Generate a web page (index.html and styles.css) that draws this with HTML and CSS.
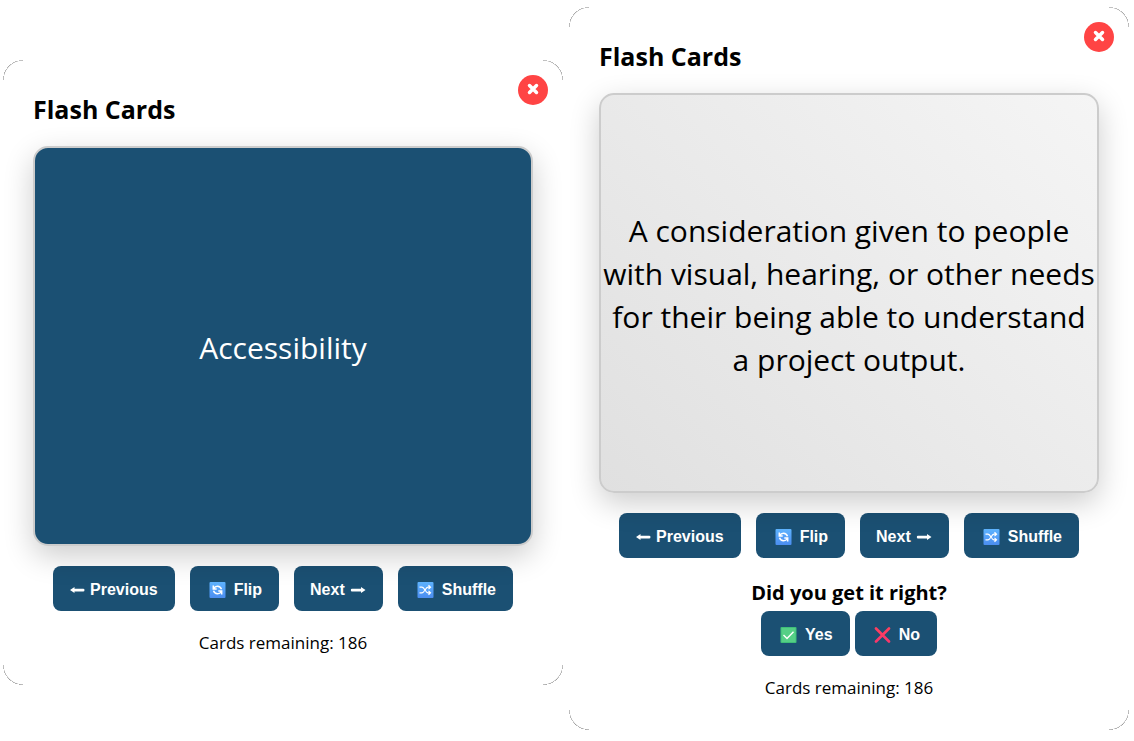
FILE: index.html
```
<!DOCTYPE html>
<html lang="en">
<head>
    <meta charset="UTF-8">
    <meta name="viewport" content="width=device-width, initial-scale=1.0">
    <title>Flash Cards</title>
    <link rel="stylesheet" href="styles.css">
</head>
<body>
    <!-- Shared icons -->
    <svg class="icon-defs" aria-hidden="true">
        <defs>
            <linearGradient id="blueTile" x1="0" y1="0" x2="0" y2="1">
                <stop offset="0" stop-color="#5fb4ff"/>
                <stop offset="1" stop-color="#4b8df0"/>
            </linearGradient>
            <linearGradient id="pinkCross" x1="0" y1="0" x2="0" y2="1">
                <stop offset="0" stop-color="#ff3f5f"/>
                <stop offset="1" stop-color="#f8376b"/>
            </linearGradient>
        </defs>
        <symbol id="icon-left" viewBox="0 0 16 16">
            <path d="M1 8 L5.500 5 V6.700 H14.200 Q15.500 6.700 15.500 8 Q15.500 9.500 14.200 9.500 H5.500 V11 Z" fill="#fff"/>
        </symbol>
        <symbol id="icon-right" viewBox="0 0 16 16">
            <path d="M15.500 8 L11 5 V6.700 H2 Q0.800 6.700 0.800 8 Q0.800 9.500 2 9.500 H11 V11 Z" fill="#fff"/>
        </symbol>
        <symbol id="icon-flip" viewBox="0 0 16 16">
            <rect width="16" height="16" rx="1" fill="url(#blueTile)"/>
            <path d="M3.800 3.500 V7 H7.200 M4.200 6.500 C5.800 3.500 10.500 3.300 12 7.200 M12.200 12.500 V9 H8.800 M11.800 9.500 C10.200 12.500 5.500 12.700 4 8.800" fill="none" stroke="#fff" stroke-width="1.500"/>
        </symbol>
        <symbol id="icon-shuffle" viewBox="0 0 16 16">
            <rect width="16" height="16" rx="1" fill="url(#blueTile)"/>
            <path d="M2 5.200 H4.500 C7 5.200 8 10.800 10.500 10.800 H12.500 M2 10.800 H4.500 C7 10.800 8 5.200 10.500 5.200 H12.500 M11 3.300 L13 5.200 L11 7.100 M11 8.900 L13 10.800 L11 12.700" fill="none" stroke="#fff" stroke-width="1.200"/>
        </symbol>
        <symbol id="icon-yes" viewBox="0 0 16 16">
            <rect width="16" height="16" rx="1" fill="#3fbf78"/>
            <rect x="1" y="1" width="14" height="14" fill="#55cf86"/>
            <path d="M3 8 L6.500 11.500 L13 4.700" fill="none" stroke="#fff" stroke-width="1.400"/>
        </symbol>
        <symbol id="icon-no" viewBox="0 0 16 16">
            <path d="M1.500 1.500 L14.500 14.500 M14.500 1.500 L1.500 14.500" fill="none" stroke="url(#pinkCross)" stroke-width="2.600" stroke-linecap="round"/>
        </symbol>
        <symbol id="icon-close" viewBox="0 0 12 12">
            <path d="M2.500 2.500 L9.500 9.500 M9.500 2.500 L2.500 9.500" fill="none" stroke="#fff" stroke-width="3.500" stroke-linecap="round"/>
        </symbol>
    </svg>

    <main class="container">
        <section class="modal modal-front">
            <button class="close-btn" aria-label="Close"><svg><use href="#icon-close"/></svg></button>
            <h2>Flash Cards</h2>
            <div class="flashcard front">Accessibility</div>
            <div class="controls">
                <button class="btn"><svg class="arrow"><use href="#icon-left"/></svg>Previous</button>
                <button class="btn"><svg class="emoji"><use href="#icon-flip"/></svg>Flip</button>
                <button class="btn">Next<svg class="arrow"><use href="#icon-right"/></svg></button>
                <button class="btn"><svg class="emoji"><use href="#icon-shuffle"/></svg>Shuffle</button>
            </div>
            <p class="remaining">Cards remaining: 186</p>
        </section>

        <section class="modal">
            <button class="close-btn" aria-label="Close"><svg><use href="#icon-close"/></svg></button>
            <h2>Flash Cards</h2>
            <div class="flashcard back">A consideration given to people with visual, hearing, or other needs for their being able to understand a project output.</div>
            <div class="controls">
                <button class="btn"><svg class="arrow"><use href="#icon-left"/></svg>Previous</button>
                <button class="btn"><svg class="emoji"><use href="#icon-flip"/></svg>Flip</button>
                <button class="btn">Next<svg class="arrow"><use href="#icon-right"/></svg></button>
                <button class="btn"><svg class="emoji"><use href="#icon-shuffle"/></svg>Shuffle</button>
            </div>
            <p class="question">Did you get it right?</p>
            <div class="answers">
                <button class="btn"><svg class="emoji"><use href="#icon-yes"/></svg>Yes</button>
                <button class="btn"><svg class="emoji"><use href="#icon-no"/></svg>No</button>
            </div>
            <p class="remaining">Cards remaining: 186</p>
        </section>
    </main>
</body>
</html>
```
FILE: styles.css
```
* {
    box-sizing: border-box;
}

body {
    margin: 0;
    font-family: "Segoe UI", "Open Sans", "Noto Sans", sans-serif;
    background-color: #fff;
    color: #000;
}

.icon-defs {
    position: absolute;
    width: 0;
    height: 0;
}

.container {
    display: flex;
    justify-content: center;
    align-items: flex-start;
    gap: 6px;
    padding: 7px 5px 11px 3px;
}

.modal {
    position: relative;
    flex: 1;
    max-width: 560px;
    padding: 30px;
    border-radius: 20px;
    overflow: hidden;
    text-align: center;
    /* thin arc in each corner */
    background:
        radial-gradient(circle at 100% 100%, transparent 19px, #777 20px, transparent 20px) 0 0 / 20px 20px no-repeat,
        radial-gradient(circle at 0 100%, transparent 19px, #777 20px, transparent 20px) 100% 0 / 20px 20px no-repeat,
        radial-gradient(circle at 100% 0, transparent 19px, #777 20px, transparent 20px) 0 100% / 20px 20px no-repeat,
        radial-gradient(circle at 0 0, transparent 19px, #777 20px, transparent 20px) 100% 100% / 20px 20px no-repeat,
        #fff;
}

.modal-front {
    margin-top: 53px;
}

.modal h2 {
    margin: 0 0 18px;
    font-size: 25px;
    line-height: 38px;
    text-align: left;
}

.close-btn {
    position: absolute;
    top: 15px;
    right: 15px;
    display: flex;
    justify-content: center;
    align-items: center;
    width: 30px;
    height: 30px;
    padding: 0 0 2px;
    border: none;
    border-radius: 50%;
    background-color: #ff4444;
    cursor: pointer;
}

.close-btn svg {
    width: 12px;
    height: 12px;
}

.flashcard {
    position: relative;
    z-index: 1;
    display: flex;
    justify-content: center;
    align-items: center;
    height: 400px;
    padding-top: 3px;
    border: 2px solid #ccc;
    border-radius: 15px;
    box-shadow: 0 10px 30px rgba(0, 0, 0, 0.2);
    font-size: 30px;
    line-height: 43px;
}

.front {
    background-color: #1b5073;
    color: #fff;
}

.back {
    background: linear-gradient(45deg, #e0e0e0, #f5f5f5);
}

.controls {
    display: flex;
    justify-content: center;
    gap: 15px;
    margin-top: 20px;
}

.answers {
    display: flex;
    justify-content: center;
    gap: 5px;
}

.btn {
    display: flex;
    align-items: center;
    gap: 5px;
    height: 45px;
    padding: 2px 17px 0 16px;
    border: none;
    border-radius: 8px;
    background-color: #1b5073;
    color: #fff;
    font-family: Arial, "Liberation Sans", sans-serif;
    font-size: 16px;
    font-weight: bold;
    cursor: pointer;
}

.btn:hover {
    background-color: #154360;
}

.arrow {
    width: 16px;
    height: 16px;
}

.emoji {
    width: 23px;
    height: 16px;
}

.question {
    margin: 20px 0 3px;
    font-size: 20px;
    font-weight: bold;
    line-height: 30px;
}

.remaining {
    margin: 20px 0 0;
    font-size: 17px;
    line-height: 24px;
}
```
